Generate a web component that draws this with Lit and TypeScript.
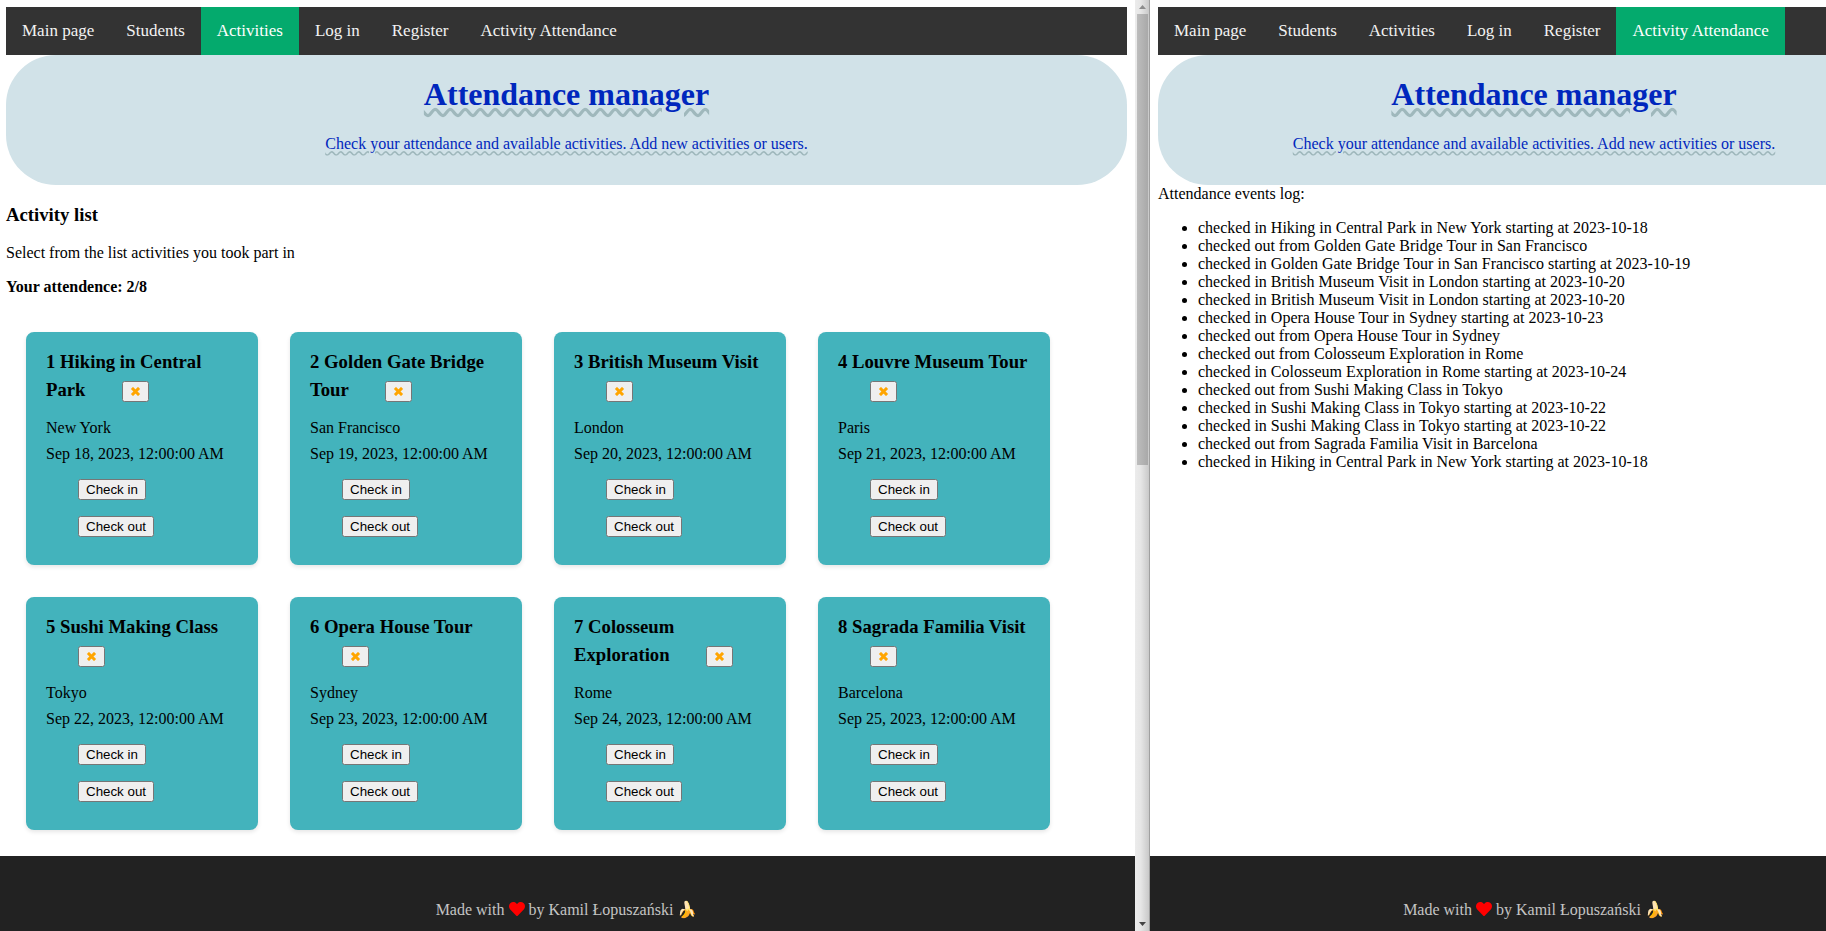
import { LitElement, html, css, svg } from "lit";
import { customElement, property } from "lit/decorators.js";

const NAV_ITEMS = ["Main page", "Students", "Activities", "Log in", "Register", "Activity Attendance"];

const ACTIVITIES = [
  { id: 1, name: "Hiking in Central Park", place: "New York", day: 18 },
  { id: 2, name: "Golden Gate Bridge Tour", place: "San Francisco", day: 19 },
  { id: 3, name: "British Museum Visit", place: "London", day: 20 },
  { id: 4, name: "Louvre Museum Tour", place: "Paris", day: 21 },
  { id: 5, name: "Sushi Making Class", place: "Tokyo", day: 22 },
  { id: 6, name: "Opera House Tour", place: "Sydney", day: 23 },
  { id: 7, name: "Colosseum Exploration", place: "Rome", day: 24 },
  { id: 8, name: "Sagrada Familia Visit", place: "Barcelona", day: 25 },
];

const EVENTS = [
  "checked in Hiking in Central Park in New York starting at 2023-10-18",
  "checked out from Golden Gate Bridge Tour in San Francisco",
  "checked in Golden Gate Bridge Tour in San Francisco starting at 2023-10-19",
  "checked in British Museum Visit in London starting at 2023-10-20",
  "checked in British Museum Visit in London starting at 2023-10-20",
  "checked in Opera House Tour in Sydney starting at 2023-10-23",
  "checked out from Opera House Tour in Sydney",
  "checked out from Colosseum Exploration in Rome",
  "checked in Colosseum Exploration in Rome starting at 2023-10-24",
  "checked out from Sushi Making Class in Tokyo",
  "checked in Sushi Making Class in Tokyo starting at 2023-10-22",
  "checked in Sushi Making Class in Tokyo starting at 2023-10-22",
  "checked out from Sagrada Familia Visit in Barcelona",
  "checked in Hiking in Central Park in New York starting at 2023-10-18",
];

// Navigation, banner and footer shared by both pages; the page body is slotted in.
@customElement("page-frame")
export class PageFrame extends LitElement {
  @property() active = "";

  static styles = css`
    :host {
      display: flex;
      flex-direction: column;
      min-height: 100%;
    }
    .content {
      flex: 1;
      padding: 7px 8px 0 var(--page-start, 8px);
    }
    .nav {
      display: flex;
      background: #333;
    }
    .link {
      padding: 14px 16px;
      color: #f2f2f2;
      font-size: 17px;
      line-height: 20px;
      text-decoration: none;
      white-space: nowrap;
    }
    .link.active {
      background: #04aa6d;
      color: #fff;
    }
    .banner {
      padding: 21px 0 32px;
      border-radius: 50px;
      background: #d1e2e8;
      color: #0027bd;
      text-align: center;
    }
    .title,
    .lead {
      text-decoration: underline wavy #9fb8bc;
    }
    .title {
      margin: 0 0 22px;
      font-size: 32px;
      line-height: 37px;
      text-underline-offset: 3px;
    }
    .lead {
      margin: 0;
      line-height: 18px;
    }
    .footer {
      padding: 45px 8px 12px var(--page-start, 8px);
      background: #222;
      color: #c4c4c4;
      line-height: 18px;
      text-align: center;
    }
    .heart {
      width: 16px;
      height: 16px;
      vertical-align: -2px;
      fill: #f00;
    }
  `;

  render() {
    return html`
      <div class="content">
        <nav class="nav">
          ${NAV_ITEMS.map(
            (item) => html`<a class="link ${item === this.active ? "active" : ""}" href="#">${item}</a>`
          )}
        </nav>
        <header class="banner">
          <h1 class="title">Attendance manager</h1>
          <p class="lead">Check your attendance and available activities. Add new activities or users.</p>
        </header>
        <slot></slot>
      </div>
      <footer class="footer">
        Made with
        <svg class="heart" viewBox="0 0 512 512" aria-label="love">
          ${svg`<path d="M462.3 62.6C407.5 15.9 326 24.3 275.7 76.2L256 96.5l-19.7-20.3C186.1 24.3 104.5 15.9 49.7 62.6c-62.8 53.600-66.100 149.800-9.900 207.900l193.500 199.800c12.500 12.900 32.800 12.900 45.300 0l193.500-199.800c56.300-58.100 53-154.300-9.800-207.900z"/>`}
        </svg>
        by Kamil Łopuszański 🍌
      </footer>
    `;
  }
}

@customElement("activity-card")
export class ActivityCard extends LitElement {
  @property({ attribute: false }) activity = ACTIVITIES[0];

  static styles = css`
    :host {
      display: block;
      box-sizing: border-box;
      width: 232px;
      min-height: 233px;
      padding: 16px 20px 28px;
      border-radius: 8px;
      background: #43b3bc;
      box-shadow: 0 2px 4px rgba(0, 0, 0, 0.1);
    }
    .name {
      margin: 0 0 11px;
      line-height: 28px;
    }
    .line {
      margin: 0;
      line-height: 26px;
    }
    .remove,
    .check {
      margin: 0 0 0 32px;
    }
    .remove {
      height: 21px;
      line-height: 15px;
    }
    .cross {
      width: 11px;
      height: 9px;
      fill: none;
      stroke: orange;
      stroke-width: 3;
      stroke-linecap: square;
    }
    .actions {
      display: flex;
      flex-direction: column;
      align-items: flex-start;
      gap: 16px;
      padding-top: 12px;
    }
  `;

  render() {
    const a = this.activity;
    return html`
      <h3 class="name">
        ${a.id} ${a.name}
        <button class="remove" aria-label="Remove ${a.name}">
          <svg class="cross" viewBox="0 0 11 9"><path d="M3 2L8 7M8 2L3 7" /></svg>
        </button>
      </h3>
      <p class="line">${a.place}</p>
      <p class="line">Sep ${a.day}, 2023, 12:00:00 AM</p>
      <div class="actions">
        <button class="check">Check in</button>
        <button class="check">Check out</button>
      </div>
    `;
  }
}

@customElement("app-root")
export class AppRoot extends LitElement {
  static styles = css`
    :host {
      display: grid;
      grid-template-columns: minmax(0, 1fr) 15px 676px;
      height: 100vh;
      overflow: hidden;
      background: #fff;
      color: #000;
      font-family: "Liberation Serif", "Times New Roman", serif;
      font-size: 16px;
      line-height: 18px;
    }
    .pane {
      min-width: 0;
      height: 100%;
      overflow: hidden;
    }
    .activities {
      --page-start: 6px;
    }
    .log-page {
      width: 768px;
    }
    .heading {
      margin: 19px 0 18px;
      line-height: 22px;
    }
    .text {
      margin: 0 0 16px;
    }
    .total {
      margin: 0;
      font-weight: bold;
    }
    .cards {
      display: flex;
      flex-wrap: wrap;
      gap: 32px;
      padding: 36px 20px 0;
    }
    .scrollbar {
      display: flex;
      flex-direction: column;
      align-items: center;
      box-sizing: border-box;
      padding: 5px 1px 5px 2px;
      border-right: 1px solid #a0a0a0;
      background: linear-gradient(to right, #ececec, #e6e6e6 40%, #c9c9c9);
    }
    .arrow {
      width: 7px;
      height: 4px;
      fill: #8c8c8c;
    }
    .arrow.down {
      margin-top: auto;
      fill: #444;
    }
    .thumb {
      width: 11px;
      height: 49%;
      margin-top: 5px;
      background: linear-gradient(to right, #bdbdbd, #a9a9a9);
    }
    .events {
      margin: 16px 0;
      padding-left: 40px;
    }
  `;

  render() {
    return html`
      <section class="pane">
        <page-frame class="activities" active="Activities">
          <h3 class="heading">Activity list</h3>
          <p class="text">Select from the list activities you took part in</p>
          <p class="total">Your attendence: 2/8</p>
          <div class="cards">
            ${ACTIVITIES.map((a) => html`<activity-card .activity=${a}></activity-card>`)}
          </div>
        </page-frame>
      </section>
      <div class="scrollbar">
        <svg class="arrow" viewBox="0 0 7 4"><path d="M0 4L3.500 0L7 4z" /></svg>
        <div class="thumb"></div>
        <svg class="arrow down" viewBox="0 0 7 4"><path d="M0 0L3.500 4L7 0z" /></svg>
      </div>
      <section class="pane">
        <page-frame class="log-page" active="Activity Attendance">
          <div>Attendance events log:</div>
          <ul class="events">
            ${EVENTS.map((e) => html`<li>${e}</li>`)}
          </ul>
        </page-frame>
      </section>
    `;
  }
}
